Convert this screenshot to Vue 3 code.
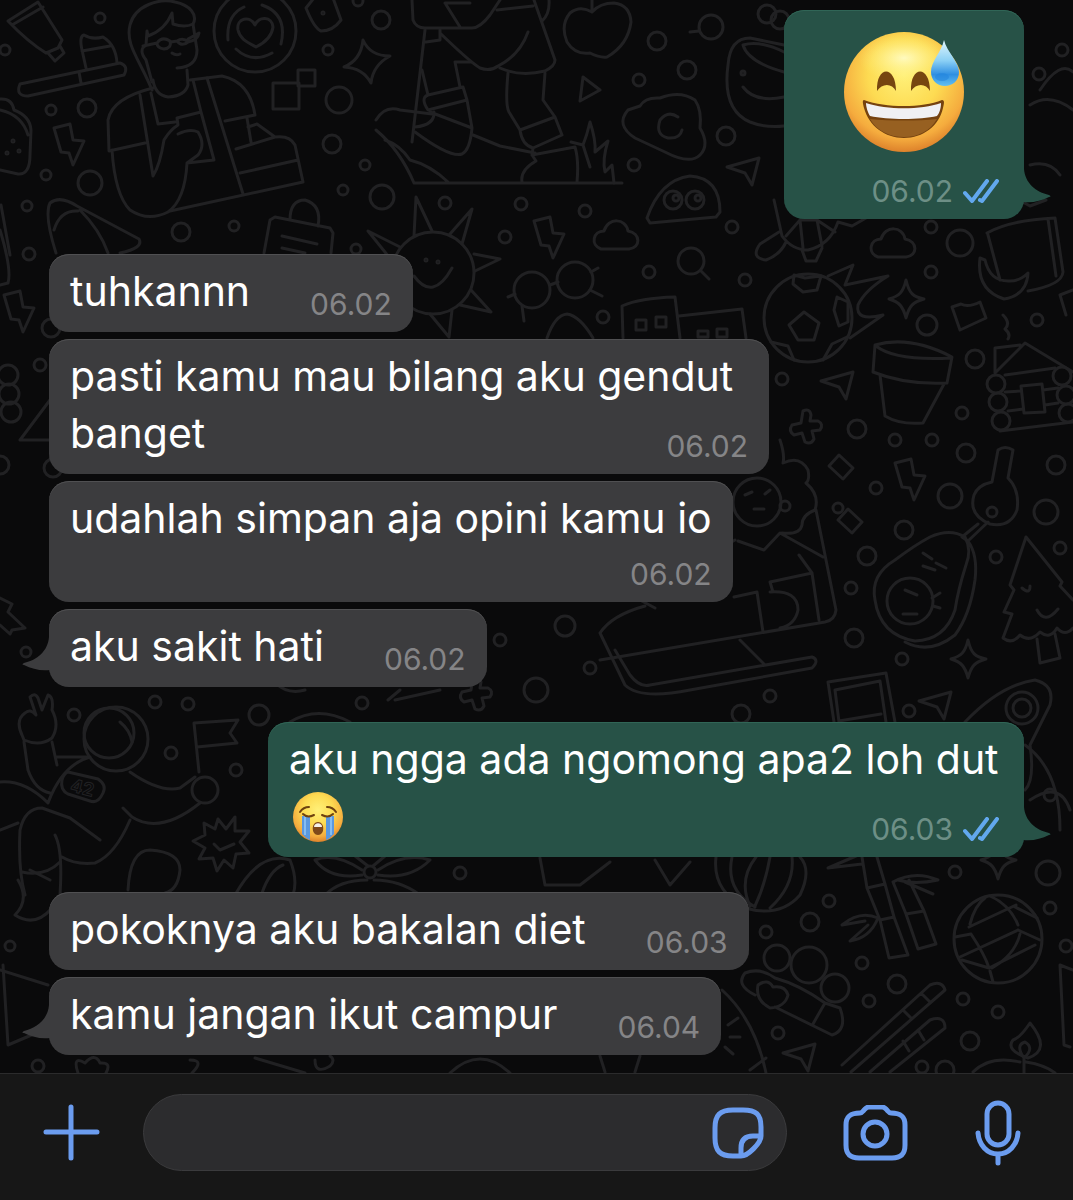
<template>
  <div class="chat">
    <main class="conversation">
      <svg class="wallpaper" viewBox="0 0 1073 1073" preserveAspectRatio="xMidYMin slice" aria-hidden="true">
        <circle v-for="(c, i) in circles" :key="'c' + i" :cx="c[0]" :cy="c[1]" :r="c[2]" />
        <path v-for="(d, i) in doodles" :key="'d' + i" :d="d" />
        <path v-for="(s, i) in stamps" :key="'s' + i" :d="shapes[s[0]]" :transform="`translate(${s[1]} ${s[2]})`" />
        <text x="71" y="794" transform="rotate(14 82 786)">42</text>
      </svg>

      <ol class="messages">
        <li
          v-for="msg in messages"
          :key="msg.id"
          class="bubble"
          :class="[msg.from, msg.layout, { last: msg.last }]"
        >
          <svg v-if="msg.last" class="tail" viewBox="0 0 30 34" aria-hidden="true">
            <path d="M3 0 C4 14 15 23 28 26 C30 27 30 28 28 28 C20 32 12 34 2 33 L0 33 V0 Z" />
          </svg>

          <svg v-if="msg.emoji === 'sweat'" class="emoji-big" viewBox="0 0 120 120" role="img" aria-label="😅">
            <defs>
              <radialGradient id="face" cx="0.5" cy="0.36" r="0.66">
                <stop offset="0" stop-color="#fff078" />
                <stop offset="0.45" stop-color="#fddb52" />
                <stop offset="0.8" stop-color="#f5ac3e" />
                <stop offset="1" stop-color="#d97a28" />
              </radialGradient>
              <linearGradient id="drop" x1="0" y1="0" x2="0" y2="1">
                <stop offset="0" stop-color="#e2f6fd" />
                <stop offset="0.45" stop-color="#8bd0f5" />
                <stop offset="0.75" stop-color="#2f8fe2" />
                <stop offset="1" stop-color="#62c0f3" />
              </linearGradient>
              <radialGradient id="shine">
                <stop offset="0" stop-color="#fffcc8" stop-opacity="0.9" />
                <stop offset="1" stop-color="#fff37a" stop-opacity="0" />
              </radialGradient>
            </defs>
            <circle cx="60" cy="60" r="60" fill="url(#face)" />
            <ellipse cx="60" cy="26" rx="46" ry="24" fill="url(#shine)" />
            <path d="M33 59 C32 33 52 33 52 59 C48 51 38 51 33 59 Z" fill="#764510" />
            <path d="M67 59 C66 33 86 33 86 59 C82 51 72 51 67 59 Z" fill="#764510" />
            <path d="M20 68 C42 76 78 76 98 68 C101 68 100 72 99 76 C95 94 79 106 60 106 C41 106 25 94 20 76 C19 72 18 68 20 68 Z" fill="#75420f" />
            <path d="M26 87 C46 89 74 89 93 87 C86 99 74 105 60 105 C46 105 33 99 26 87 Z" fill="#976021" />
            <path d="M22 71 C43 78 77 78 97 71 C97 77 95 82 93 84 C76 88 44 88 26 84 C24 81 22 75 22 71 Z" fill="#f0f0f3" />
            <path d="M100 8 C103 20 115 30 115 40 C115 49 108 54 101 54 C93 54 87 48 87 40 C87 29 97 21 100 8 Z" fill="url(#drop)" />
            <ellipse cx="98" cy="45" rx="7" ry="4" fill="#2385dd" opacity="0.6" />
          </svg>

          <p v-else class="text">
            {{ msg.text }}
            <svg v-if="msg.emoji === 'cry'" class="emoji" viewBox="0 0 50 50" role="img" aria-label="😭">
              <circle cx="25" cy="25" r="25" fill="url(#face)" />
              <path d="M9 24 V42 C12 45 14 47 17 48 V24 Z M33 24 V48 C36 47 38 45 41 42 V24 Z" fill="#5a98e0" />
              <path d="M12 24 V43 M38 24 V43" fill="none" stroke="#86bdf2" stroke-width="2" />
              <path d="M10 22 C13 25 17 25 21 23 M29 23 C33 25 37 25 40 22 M7 20 C9 17 12 15 16 15 M34 15 C38 15 41 17 43 20" fill="none" stroke="#6e410f" stroke-width="2" stroke-linecap="round" />
              <path d="M25 30 C32 30 32 43 25 43 C18 43 18 30 25 30 Z" fill="#80491a" />
              <path d="M21 35 C21 30 29 30 29 35 Z" fill="#f5f2ec" />
            </svg>
          </p>

          <span class="meta">
            <time>{{ msg.time }}</time>
            <svg v-if="msg.from === 'me'" class="checks" viewBox="0 0 36 24" role="img" aria-label="Dibaca">
              <path d="M2 14 L9 22 L24 2 M17 21 L19 22 L34 2" />
            </svg>
          </span>
        </li>
      </ol>
    </main>

    <form class="composer" @submit.prevent="send">
      <button type="button" class="plus" aria-label="Lampirkan">
        <svg viewBox="0 0 57 57"><path d="M28 3 V54 M3 28 H54" /></svg>
      </button>
      <div class="field">
        <input v-model="draft" type="text" aria-label="Pesan" />
        <button type="button" class="sticker" aria-label="Stiker">
          <svg viewBox="0 0 52 52">
            <path d="M49 29 V20 C49 7 44 3 31 3 H21 C8 3 3 8 3 21 V31 C3 44 8 49 21 49 H29 C36 49 49 36 49 29 H41 C33 29 29 33 29 41 V49" />
          </svg>
        </button>
      </div>
      <button type="button" class="camera" aria-label="Kamera">
        <svg viewBox="0 0 65 56">
          <path d="M17 8 C19 8 20 6 22 4 C23 3 24 2 26 2 H39 C41 2 42 3 43 4 C45 6 46 8 48 8 C58 8 62 12 62 20 V40 C62 49 58 53 49 53 H16 C7 53 3 49 3 40 V20 C3 12 7 8 17 8 Z" />
          <circle cx="32" cy="29" r="12" />
        </svg>
      </button>
      <button type="button" class="mic" aria-label="Rekam suara">
        <svg viewBox="0 0 46 66">
          <rect x="12" y="3" width="22" height="42" rx="11" />
          <path d="M3 33 C4 45 12 54 23 54 C34 54 42 45 43 33 M23 54 V63" />
        </svg>
      </button>
    </form>
  </div>
</template>

<script setup>
import { ref } from "vue"

const draft = ref("")

const messages = ref([
  { id: 1, from: "me", layout: "big", emoji: "sweat", text: "", time: "06.02", last: true },
  { id: 2, from: "them", layout: "inline", text: "tuhkannn", time: "06.02" },
  { id: 3, from: "them", layout: "wrapped", text: "pasti kamu mau bilang aku gendut banget", time: "06.02" },
  { id: 4, from: "them", layout: "stacked", text: "udahlah simpan aja opini kamu io", time: "06.02" },
  { id: 5, from: "them", layout: "inline", text: "aku sakit hati", time: "06.02", last: true },
  { id: 6, from: "me", layout: "wrapped", emoji: "cry", text: "aku ngga ada ngomong apa2 loh dut", time: "06.03", last: true },
  { id: 7, from: "them", layout: "inline", text: "pokoknya aku bakalan diet", time: "06.03" },
  { id: 8, from: "them", layout: "inline", text: "kamu jangan ikut campur", time: "06.04", last: true },
])

const send = () => {
  const text = draft.value.trim()
  if (text === "") return
  const time = new Date().toTimeString().slice(0, 5).replace(":", ".")
  messages.value.push({ id: messages.value.length + 1, from: "me", layout: "inline", text, time, last: true })
  draft.value = ""
}

// wallpaper: x, y, radius
const circles = [
  [100, 18, 5], [5, 50, 5], [51, 110, 5], [87, 108, 9], [46, 175, 5], [90, 183, 12], [27, 206, 5],
  [181, 232, 9], [234, 226, 5], [29, 254, 6], [255, 31, 41], [381, 20, 9], [328, 50, 5], [339, 100, 13],
  [332, 144, 9], [365, 165, 5], [343, 190, 5], [382, 197, 12], [356, 249, 5], [358, 1, 5], [323, 13, 1],
  [13, 141, 1], [7, 153, 1], [19, 151, 1], [657, 41, 9], [711, 27, 12], [687, 70, 9], [639, 80, 6],
  [767, 14, 9], [726, 136, 9], [634, 165, 6], [585, 211, 6], [521, 204, 6], [445, 203, 6], [505, 237, 6],
  [732, 227, 6], [743, 73, 2], [673, 200, 9], [695, 200, 9], [676, 198, 3], [698, 198, 3], [433, 273, 41],
  [426, 260, 1], [438, 262, 1], [532, 290, 18], [575, 280, 18], [691, 261, 13], [649, 272, 6],
  [745, 280, 6], [603, 317, 6], [808, 318, 44], [931, 227, 6], [931, 272, 6], [960, 243, 13],
  [927, 325, 10], [782, 379, 6], [857, 429, 9], [975, 359, 9], [962, 413, 6], [895, 440, 6],
  [932, 440, 6], [966, 453, 9], [1056, 465, 9], [876, 488, 6], [1037, 320, 6], [996, 384, 9],
  [998, 402, 9], [1001, 421, 9], [1062, 376, 9], [1066, 395, 9], [1068, 413, 9], [950, 496, 12],
  [1046, 512, 12], [904, 530, 9], [867, 556, 9], [851, 588, 6], [996, 557, 6], [1060, 548, 6],
  [854, 638, 9], [902, 659, 6], [770, 696, 6], [741, 714, 9], [909, 711, 6], [838, 508, 5],
  [910, 601, 23], [992, 512, 5], [1022, 708, 16], [1022, 708, 9], [757, 502, 24], [785, 506, 5],
  [116, 739, 32], [109, 733, 25], [205, 790, 13], [74, 715, 6], [155, 702, 6], [188, 704, 6],
  [259, 715, 10], [171, 753, 6], [236, 770, 6], [26, 652, 5], [362, 703, 6], [536, 690, 12],
  [370, 872, 6], [460, 873, 6], [955, 872, 6], [1048, 873, 12], [829, 901, 6], [810, 922, 9],
  [766, 932, 6], [862, 963, 6], [897, 984, 9], [869, 1001, 6], [778, 1033, 6], [970, 1041, 9],
  [998, 1012, 6], [963, 999, 6], [1050, 908, 6], [1066, 946, 6], [777, 958, 13], [809, 965, 18],
  [835, 988, 14], [922, 1067, 6], [945, 1070, 9], [998, 939, 44], [38, 1066, 6], [8, 375, 10],
  [9, 394, 10], [11, 412, 10], [40, 365, 6], [51, 328, 9], [0, 465, 9], [53, 468, 9], [10, 946, 5],
  [1050, 795, 6], [780, 20, 9], [1062, 50, 6], [1039, 74, 6], [565, 626, 10], [500, 640, 6], [590, 668, 6],
]

const shapes = {
  bolt: "M-15 -17 L1 -21 L4 -5 L15 -4 L4 20 L0 8 L-8 7 Z",
  cloud: "M-15 11 C-26 7 -23 -7 -12 -7 C-8 -21 10 -20 12 -7 C25 -5 25 10 13 11 Z",
  star: "M0 -19 C3 -6 7 -2 18 0 C7 3 3 7 0 19 C-3 7 -7 3 -17 0 C-7 -3 -3 -6 0 -19 Z",
  cursor: "M-17 -3 L15 -12 L8 15 L1 3 Z",
  diamond: "M-2 -12 L12 1 L2 12 L-12 -1 Z",
  cross: "M-3 -16 Q4 -19 5 -12 L4 -6 L12 -6 Q18 -3 14 3 L6 4 L8 12 Q5 18 -1 15 L-4 6 L-12 8 Q-18 4 -14 -2 L-5 -4 Z",
  burst: "M-3 -24 L5 -14 L14 -26 L14 -12 L28 -12 L19 -1 L28 10 L15 11 L12 25 L3 17 L-4 28 L-8 15 L-22 16 L-16 5 L-28 -2 L-16 -8 L-17 -20 L-6 -14 Z M-7 1 L-1 7 L13 1",
}

const stamps = [
  ["bolt", 69, 145], ["bolt", 549, 238], ["bolt", 910, 480], ["bolt", 19, 312],
  ["cloud", 616, 238], ["cloud", 893, 246], ["star", 906, 299], ["star", 968, 659], ["star", 998, 860],
  ["cursor", 744, 170], ["cursor", 838, 384], ["cursor", 800, 1056], ["cursor", 936, 704],
  ["diamond", 841, 467], ["diamond", 850, 521], ["cross", 806, 427], ["cross", 476, 694], ["burst", 221, 843],
]

const doodles = [
  // toothpaste and brush
  "M8 21 L38 2 L62 40 L58 48 L46 53 Q28 42 8 21 Z M12 25 L43 7 M48 53 L55 61 L64 53 L60 46",
  "M20 84 L120 63 Q129 66 124 75 L28 96 Q15 96 20 84 Z M86 68 L82 50 Q79 36 84 35 Q92 40 103 37 Q116 45 117 63 M82 51 L110 46 M79 72 L81 83",
  // reader
  "M152 90 C140 60 125 45 130 25 C135 5 160 -2 175 2 C190 5 198 15 193 24 Q185 28 173 24 L172 13 Q165 30 148 36 L147 31 L146 45 Q138 50 146 60 L152 82",
  "M193 24 L197 50 Q197 67 177 68 M187 70 L188 85 Q185 96 168 97 Q155 95 153 80 M143 46 L157 43 Q162 36 170 41 Q172 48 164 49 Q157 48 157 43 M171 42 L177 41 Q183 37 188 42 Q182 47 177 41 M188 39 L199 33 Q198 40 188 42 M172 53 Q176 56 180 54",
  "M153 88 Q112 98 108 120 L109 151 L145 143 M112 150 Q115 195 130 210 Q148 222 168 212 Q185 200 187 163 L214 160 L201 112 L177 118 M140 95 L153 176 Q160 165 164 140 Q170 130 178 125 L177 118 M151 93 L158 124 L175 122 M178 134 Q190 128 198 132 Q206 145 198 155 L187 163 M193 80 L201 112 M207 78 L243 194",
  "M190 80 L222 76 Q250 82 255 115 L225 121 M170 211 L303 182 L295 145 Q290 135 275 137 L236 149 M247 118 L251 142 M248 127 L257 124 L275 137 M240 173 L298 160",
  // heart plate
  "M228 40 Q226 15 244 7 M262 5 Q288 14 281 44 M236 49 Q252 64 272 53 M255 25 C250 15 236 18 238 30 C240 39 247 42 256 47 C266 42 272 36 273 27 C272 16 259 16 255 25 Z",
  "M273 83 H299 V109 H273 Z M298 70 H315 V86 H298 Z M306 8 L314 -2 H333 L341 20 Q333 31 321 31 Q314 28 306 8 Z M363 40 Q370 56 390 56 Q373 65 371 83 Q363 68 344 67 Q361 60 363 40 Z",
  "M0 99 Q12 98 14 110 Q30 116 31 130 L30 155 Q30 175 18 174 L0 170 M0 110 Q22 115 28 135",
  "M56 253 Q44 215 50 203 Q60 195 77 206 L139 239 Q144 248 120 253 M54 230 Q60 210 78 211 M80 210 Q100 230 108 253 M1 205 L10 255",
  "M264 253 L270 220 L275 217 L330 228 L333 233 L331 253 M290 220 Q290 200 305 200 Q322 205 318 226 M282 236 L317 244 M282 248 L305 253",
  // jumper
  "M412 0 L413 20 Q416 28 425 28 L472 28 Q480 28 490 15 L500 0 M445 3 L460 27 M445 3 H470 M497 10 L533 6 M534 0 L555 60 Q555 66 545 71 Q520 77 500 68 M549 0 Q550 14 542 21 M440 33 Q470 62 480 68 Q490 72 498 66 Q520 55 528 32 M425 30 L412 142 M426 42 L440 40 V30",
  "M455 62 L460 87 M455 62 H471 M422 70 L428 95 L463 87 L467 100 L428 110 Q420 98 428 95 M467 100 L472 128 Q470 150 462 154 Q450 158 415 132 M434 112 Q435 125 415 127 M430 112 L472 128",
  "M508 73 Q505 105 509 112 L520 130 L555 117 L543 100 L545 73 M520 130 Q522 145 533 148 L562 135 L555 117 M533 148 L532 155 L575 147 Q579 160 577 182 M532 155 L536 161 Q520 170 522 182 M414 183 H622 M376 120 Q385 105 400 110 L432 114 M376 130 Q400 150 414 183 M385 140 Q400 145 410 160 Q430 165 448 182 M473 135 L500 146 L535 153",
  "M571 142 L583 145 L590 167 M583 145 Q587 135 590 122 Q596 140 595 152 L608 141 Q602 160 605 172 L612 165 L614 183",
  "M592 12 Q580 5 570 13 Q560 25 567 42 Q575 55 590 53 Q600 58 607 57 Q628 45 631 22 Q630 5 614 3 Q600 3 592 12 Z M592 12 V0 M583 77 L600 90 L580 101 Z",
  "M640 106 Q645 97 660 98 Q680 90 695 100 Q702 110 700 128 Q710 145 700 155 Q690 165 665 152 L635 138 Q615 125 628 110 Z M678 117 Q668 110 660 120 Q655 135 668 138 Q680 139 682 130",
  "M647 218 Q660 180 690 176 Q720 178 720 212 L716 217 L650 223 Z M690 32 L699 31",
  "M728 65 Q730 38 750 38 L784 45 M743 45 Q760 40 784 52 M743 45 Q748 62 784 72 M728 65 Q722 110 750 122 Q765 128 784 126 M743 87 Q755 103 784 97",
  // sun
  "M414 236 L416 197 L432 231 M450 234 L472 209 L462 244 M474 254 L500 259 L475 271 M471 290 L491 312 L460 305 M430 314 L449 337 L452 310 M400 247 L368 231 L393 262 M414 276 Q433 302 452 268",
  "M550 285 L558 282 M515 294 L508 297 M522 306 L524 321 M591 272 L598 268 M590 290 L602 296 M701 271 L709 279",
  "M623 338 L622 306 Q640 298 675 297 L680 338 M679 316 L742 309 L746 338 M636 320 h10 v10 h-10 Z M656 317 h10 v10 h-10 Z M698 331 h10 v6 h-10 Z M717 329 h10 v8 h-10 Z M547 338 Q555 315 567 314 Q580 316 593 338",
  // football
  "M804 312 L819 323 L814 340 H798 L789 325 Z M794 275 L805 278 L821 276 L817 290 L803 292 L793 284 Z M837 297 L848 302 V322 L839 326 L834 310 Z M771 342 L788 346 L794 360 M847 337 L832 344 L823 360 M828 276 L853 265 L845 285 L888 276 Q865 290 858 305 Q855 322 883 315 L850 338",
  "M774 200 L782 236 Q792 250 808 250 Q830 245 838 222 M779 232 L760 244 Q750 258 766 260 Q780 255 786 242 M802 250 L806 261 H816 L822 248 M838 222 L852 226 L866 218 M800 220 L803 248 M817 220 L822 246 M786 236 L800 220 H817 L835 232",
  "M988 235 L1000 280 M987 233 Q1010 220 1055 218 L1063 272 Q1062 285 1028 291 M1048 219 L1056 276 M980 258 Q976 290 1004 299 Q1027 295 1028 273 Q1020 281 1010 281 Q990 282 985 260 Z M1012 196 L1030 206 L1046 200",
  "M952 307 L961 304 Q968 308 980 302 L986 318 L960 330 Z M875 345 Q910 335 952 357 L947 383 Q905 385 873 372 Z M876 346 Q895 361 951 358 M880 375 L885 416 Q900 425 923 423 L944 384",
  "M995 373 L1025 343 L1073 372 M995 373 V348 L1020 345 M1005 375 L1055 368 M1005 392 L1020 391 M1008 411 L1023 409 M1021 386 L1042 384 L1045 412 L1024 413 Z M1043 390 L1058 388 M1045 405 L1058 403 M1000 431 L1073 422 M1003 315 Q1011 323 1005 329 Q1011 334 1008 339 M1060 295 L1073 290 M1060 295 L1066 315",
  // sledder
  "M780 440 Q785 455 783 463 Q800 455 808 470 Q810 480 806 483 Q820 495 815 510 Q802 515 802 525 Q800 535 782 533 M816 510 L836 610 Q835 620 825 622 L600 660 M738 541 L764 550 L780 533 L823 557 M799 555 L812 573 L770 582 L773 592 M812 573 L819 620 M734 597 L757 592 L763 632 M770 592 Q798 590 798 610 Q795 625 780 628",
  "M740 640 L765 665 M600 633 Q612 615 645 606 M600 633 L625 685 Q640 700 690 690 L812 668 Q820 660 812 657 L650 685 Q640 688 630 675 L615 650 M735 540 L700 560 M745 495 L752 492 M765 494 L770 490 M754 509 L764 509",
  "M998 450 Q1005 445 1013 450 L1008 478 Q1020 490 1017 510 Q1010 528 990 524 Q968 515 974 495 Q978 485 992 482 Z M978 524 L962 537 L968 541 L988 522",
  "M875 600 Q870 575 895 560 Q915 545 930 537 Q950 528 965 537 Q972 550 966 565 Q958 590 955 610 Q945 640 915 641 Q880 635 875 600 Z M968 541 Q978 555 975 580 Q970 615 955 635 Q930 655 905 642 M923 553 L932 559 M923 566 L935 570 M936 563 L946 568 M905 590 L917 595 M903 614 H917 M932 598 L940 593 M933 606 L940 608",
  "M1026 537 L1010 585 L1014 590 L1004 612 L1012 614 L1003 638 Q1012 645 1020 635 Q1030 643 1040 632 Q1050 640 1057 628 Q1065 637 1073 628 M1026 537 L1062 582 L1060 586 L1073 600 M1037 639 L1040 663 L1060 658 L1055 634 M1022 588 Q1030 595 1030 586 M1037 610 Q1045 625 1058 609",
  "M828 682 L886 673 L895 722 M828 682 L834 722 M835 690 L880 681 L886 722 M835 690 L839 722 M839 721 L881 714 M965 722 Q1000 685 1035 680 Q1055 685 1050 705 L1030 745 Q1035 780 1025 790",
  // astronaut
  "M22 735 Q15 720 25 713 Q30 708 36 715 L30 697 Q35 692 38 698 L42 710 L48 695 Q54 697 52 710 Q60 725 52 738 Q40 747 24 740 Z M24 742 L28 770 Q35 790 50 793 M52 742 L57 765 M57 757 H88 M48 803 Q62 765 90 757 M0 782 Q25 780 48 803 M130 772 Q160 793 180 788 L195 777",
  "M199 772 L194 723 L238 720 L230 733 L237 743 L197 747 M200 803 Q160 835 132 817 L123 808 M130 820 Q115 855 95 863 Q75 865 62 857 M55 835 Q63 850 60 895 M100 840 L70 818 L42 808 Q25 808 20 830 Q18 870 25 895 M22 872 Q45 877 60 862 M0 830 L18 823 M120 722 Q130 730 132 742",
  "M68 772 L98 779 Q107 785 103 793 Q98 804 90 801 L68 794 Q60 790 62 780 Q64 773 68 772 Z",
  "M128 890 Q130 850 150 850 Q180 852 180 870 Q178 890 165 893 M235 895 Q260 850 290 860 Q298 880 293 895 M262 893 Q270 870 283 865",
  "M362 870 Q335 852 315 860 Q330 880 362 875 M378 870 Q405 852 430 860 Q410 880 378 875 M367 880 Q340 880 325 895 M374 880 Q400 880 420 895 M368 866 L355 856 M373 866 L385 856 M540 858 L545 885 H580 L610 862 M655 860 L670 885 L690 862",
  "M290 722 Q318 705 350 722 M255 640 Q270 700 305 690 M400 690 L388 700 M395 700 L440 690 M640 600 L655 608",
  // pumpkin, bamboo, globe
  "M716 857 Q712 890 745 908 Q780 918 800 895 Q812 870 800 857 M732 857 Q725 890 755 907 M756 857 Q738 880 750 906 M770 857 Q765 885 755 906 M792 857 Q795 885 770 908",
  "M828 868 L870 850 M828 868 L862 864 M862 857 L867 888 L885 884 L877 857 M867 888 L880 920 L894 917 L885 884 M880 920 L889 958 L908 955 L894 917 M893 882 L906 914 L924 911 L909 880 M906 914 L918 949 L936 944 L924 911 M893 882 Q915 870 938 880 Q915 885 898 880 M905 882 L933 894 M842 925 Q860 910 878 918 Q870 938 850 941 L868 925 M842 925 L865 921",
  "M969 927 L1016 905 M971 934 Q985 955 989 968 L962 960 M1018 930 L1040 940 M971 934 L955 937 M970 924 Q975 905 985 898 M1018 925 Q1010 905 990 896 M1020 934 Q1015 955 992 968 M1018 930 L960 957 M989 968 L1035 945 M1015 907 L1037 918 M990 971 L993 982",
  "M755 995 Q735 985 745 973 Q760 967 775 978 Q800 985 825 1003 L840 1008 Q848 1030 832 1035 L775 1007 M825 1003 Q818 1015 813 1024 M770 1008 Q755 1000 758 985 Q768 978 773 987 Q785 985 788 995 Q785 1007 770 1008 Z",
  "M842 1065 L930 985 Q942 980 945 990 L851 1072 M904 1011 L911 1018 M921 993 L929 1001 M870 1072 L930 1020 Q945 1015 945 1028 L890 1072 M903 1041 L909 1051 M918 1030 L924 1040",
  "M1030 1023 Q1052 1050 1028 1058 Q1005 1050 1013 1040 Q1020 1038 1030 1023 Z M1024 1058 Q1015 1045 1025 1042 Q1035 1048 1024 1058 M1024 1058 V1073 M973 1072 Q990 1055 1020 1062 M1026 1062 Q1045 1065 1055 1073 M1073 970 L1060 965 L1064 1045 L1070 1047",
  "M722 990 Q755 1020 766 1073 M728 1025 L738 1018 M730 1037 L740 1037 M725 1047 L733 1054 M750 1070 L766 1058",
  "M0 970 L48 985 M3 965 L8 1045 L48 1028 M50 880 L30 870 M18 880 Q30 900 15 915 Q35 928 52 908 M78 1073 Q72 1055 85 1063 Q95 1052 100 1063 Q112 1062 106 1073 M190 1060 Q205 1060 192 1073 M255 1058 L305 1073 M315 1060 Q315 1075 330 1066 Q336 1060 330 1056 M450 1073 Q480 1045 510 1073 M600 1056 L605 1072 M640 1056 L635 1072",
  "M0 230 Q12 270 8 283 L0 285 M20 440 L50 400 M20 440 H50 M0 598 L12 604 L8 612 L25 628 L12 630 L10 634 L0 625",
  "M1040 90 Q1060 60 1073 72 M1030 105 Q1050 92 1073 110 M1030 165 Q1050 160 1060 175 M1025 745 Q1060 770 1060 830 M1030 800 Q1060 780 1070 810",
]
</script>

<style>
body {
  margin: 0;
  background: #0a0a0b;
}
</style>

<style scoped>
.chat {
  display: flex;
  flex-direction: column;
  min-height: 100vh;
  font-family: Inter, "Liberation Sans", sans-serif;
  color: #fff;
}

.conversation {
  position: relative;
  flex: 1;
  display: flex;
  flex-direction: column;
  justify-content: flex-end;
  overflow: hidden;
}

.wallpaper {
  position: absolute;
  top: 0;
  left: 0;
  width: 100%;
  height: 100%;
  fill: none;
  stroke: #212123;
  stroke-width: 3;
  stroke-linecap: round;
  stroke-linejoin: round;
}

.wallpaper text {
  font-size: 18px;
  font-weight: 700;
  stroke-width: 1;
}

.messages {
  position: relative;
  display: flex;
  flex-direction: column;
  align-items: flex-start;
  gap: 7px;
  margin: 0;
  padding: 9px 49px 18px;
  list-style: none;
}

.bubble {
  position: relative;
  display: grid;
  box-sizing: border-box;
  padding: 9px 21px 12px;
  border-radius: 20px;
  background: #3c3c3e;
  box-shadow: inset 0 1px #505052;
}

.them {
  max-width: 720px;
}

.me {
  align-self: flex-end;
  max-width: 756px;
  background: #275247;
  box-shadow: inset 0 1px #306556;
}

.last:not(:last-child) {
  margin-bottom: 28px;
}

.inline {
  grid-template-columns: auto auto;
  column-gap: 60px;
}

.wrapped .text,
.wrapped .meta,
.big .emoji-big,
.big .meta {
  grid-area: 1 / 1;
}

.stacked {
  row-gap: 11px;
}

.big {
  min-width: 240px;
}

.emoji-big {
  display: block;
  justify-self: center;
  width: 120px;
  height: 120px;
  margin: 13px 0 55px;
}

.text {
  margin: 0;
  font-size: 41px;
  line-height: 57px;
}

.emoji {
  width: 50px;
  height: 50px;
  margin-left: 4px;
  vertical-align: -11px;
}

.meta {
  display: flex;
  align-items: center;
  align-self: end;
  justify-self: end;
  gap: 10px;
  font-size: 30px;
  line-height: 32px;
  color: #858587;
}

.me .meta {
  padding-right: 4px;
  color: #6d8f86;
}

.checks {
  width: 36px;
  height: 24px;
  fill: none;
  stroke: #62a8ee;
  stroke-width: 4;
  stroke-linecap: round;
  stroke-linejoin: round;
}

.tail {
  position: absolute;
  right: -27px;
  bottom: 16px;
  width: 30px;
  height: 34px;
  fill: #275247;
}

.them .tail {
  right: auto;
  left: -27px;
  transform: scaleX(-1);
  fill: #3c3c3e;
}

.composer {
  position: relative;
  display: flex;
  align-items: center;
  padding: 20px 52px 29px 43px;
  border-top: 1px solid #2b2b2c;
  background: #171717;
}

.composer button {
  flex: none;
  padding: 0;
  border: none;
  background: none;
  cursor: pointer;
}

.composer svg {
  display: block;
  width: 100%;
  fill: none;
  stroke: #6b9cef;
  stroke-width: 5;
  stroke-linecap: round;
  stroke-linejoin: round;
}

.composer .plus {
  width: 57px;
}

.field {
  flex: 1;
  display: flex;
  align-items: center;
  box-sizing: border-box;
  min-width: 0;
  height: 77px;
  margin: 0 56px 0 43px;
  padding: 0 22px 0 30px;
  border: 1px solid #3b3b3d;
  border-radius: 39px;
  background: #2c2c2e;
}

.field input {
  flex: 1;
  min-width: 0;
  border: none;
  outline: none;
  background: none;
  font: inherit;
  font-size: 41px;
  color: inherit;
}

.composer .sticker {
  width: 52px;
}

.composer .camera {
  width: 65px;
  margin-right: 67px;
}

.composer .mic {
  width: 46px;
}
</style>
